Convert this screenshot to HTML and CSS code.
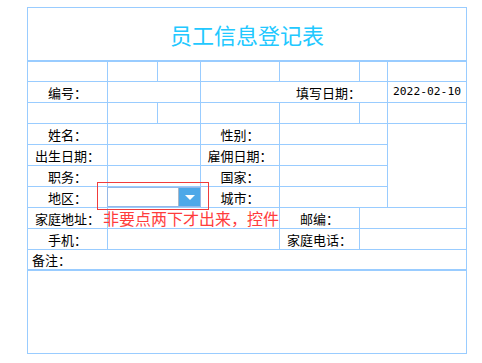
FILE: index.html
```html
<!DOCTYPE html>
<html lang="zh-CN">
<head>
  <meta charset="UTF-8">
  <title>员工信息登记表</title>
  <link rel="stylesheet" href="styles.css">
</head>
<body>
  <div class="page">
    <div class="form">
      <div class="title">员工信息登记表</div>

      <!-- spacer row -->
      <div class="cell"></div>
      <div class="cell"></div>
      <div class="cell"></div>
      <div class="cell"></div>
      <div class="cell"></div>
      <div class="cell"></div>
      <div class="cell"></div>

      <div class="cell label">编号：</div>
      <div class="cell span2"></div>
      <div class="cell label right span3">填写日期：</div>
      <div class="cell date"><div class="date-text">2022-02-10 00:00:00</div></div>

      <!-- spacer row -->
      <div class="cell"></div>
      <div class="cell"></div>
      <div class="cell"></div>
      <div class="cell"></div>
      <div class="cell"></div>
      <div class="cell"></div>
      <div class="cell"></div>

      <div class="cell label">姓名：</div>
      <div class="cell span2"></div>
      <div class="cell label">性别：</div>
      <div class="cell span2"></div>
      <div class="cell photo"></div>

      <div class="cell label">出生日期：</div>
      <div class="cell span2"></div>
      <div class="cell label">雇佣日期：</div>
      <div class="cell span2"></div>

      <div class="cell label">职务：</div>
      <div class="cell span2"></div>
      <div class="cell label">国家：</div>
      <div class="cell span2"></div>

      <div class="cell label">地区：</div>
      <div class="cell span2">
        <div class="combo">
          <div class="combo-input"></div>
          <div class="combo-btn"><span class="arrow"></span></div>
        </div>
      </div>
      <div class="cell label">城市：</div>
      <div class="cell span2"></div>

      <div class="cell label">家庭地址：</div>
      <div class="cell span3"></div>
      <div class="cell label">邮编：</div>
      <div class="cell span2"></div>

      <div class="cell label">手机：</div>
      <div class="cell span3"></div>
      <div class="cell label">家庭电话：</div>
      <div class="cell span2"></div>

      <div class="cell note-label">备注：</div>
      <div class="cell note-area"></div>
    </div>

    <!-- annotation drawn over the form -->
    <div class="mark-box"></div>
    <div class="mark-text">非要点两下才出来，控件</div>
  </div>
</body>
</html>
```

FILE: styles.css
```css
/* Global */
body {
  margin: 0;
  background: #fff;
  font-family: "Noto Sans CJK SC", "Noto Sans", sans-serif;
  font-size: 13px;
  color: #000;
}

.page {
  position: relative;
  padding: 7px 0 0 27px;
}

/* Form grid: background shows through the 1px gaps as lines */
.form {
  display: grid;
  grid-template-columns: 79px 49px 42px 78px 79px 27px 78px;
  grid-template-rows: 53px 19px repeat(8, 20px) 20px 82px;
  gap: 1px;
  width: 440px;
  box-sizing: border-box;
  padding: 1px;
  background: #99ccff;
}

.cell {
  background: #fff;
  display: flex;
  align-items: center;
  justify-content: center;
  line-height: 15px;
  white-space: nowrap;
}

.title {
  grid-column: 1 / -1;
  background: #fff;
  border-bottom: 1px solid #99ccff;
  display: flex;
  align-items: center;
  justify-content: center;
  font-size: 22px;
  color: #22c8ff;
}

.span2 { grid-column: span 2; }
.span3 { grid-column: span 3; }

.right {
  justify-content: flex-end;
  padding-right: 26px;
}

/* Date cell clips the second line */
.date {
  align-items: flex-start;
  justify-content: flex-start;
  overflow: hidden;
}

.date-text {
  width: 72px;
  padding: 2px 0 0 5px;
  font-family: "DejaVu Sans Mono", "Liberation Mono", monospace;
  font-size: 11.3px;
  line-height: 15px;
  white-space: normal;
}

.photo {
  grid-row: span 4;
}

.note-label {
  grid-column: 1 / -1;
  justify-content: flex-start;
  padding-left: 4px;
  border-bottom: 1px solid #99ccff;
}

.note-area {
  grid-column: 1 / -1;
}

/* Combo box */
.combo {
  display: flex;
  width: 94px;
  height: 20px;
  margin: 0 -1px;
  box-sizing: border-box;
  border: 1px solid #95b8e7;
  background: #fff;
}

.combo-input {
  flex: 1;
}

.combo-btn {
  width: 21px;
  background: #4ea8e8;
  border-left: 1px solid #aab8c8;
  display: flex;
  align-items: center;
  justify-content: center;
}

.arrow {
  width: 0;
  height: 0;
  border-left: 5px solid transparent;
  border-right: 5px solid transparent;
  border-top: 5px solid #fff;
}

/* Red annotation */
.mark-box {
  position: absolute;
  left: 97px;
  top: 182px;
  width: 112px;
  height: 28px;
  box-sizing: border-box;
  border: 1px solid #f03c3c;
}

.mark-text {
  position: absolute;
  left: 103px;
  top: 209px;
  font-size: 16px;
  line-height: 18px;
  color: #ff3c3c;
  white-space: nowrap;
}
```
